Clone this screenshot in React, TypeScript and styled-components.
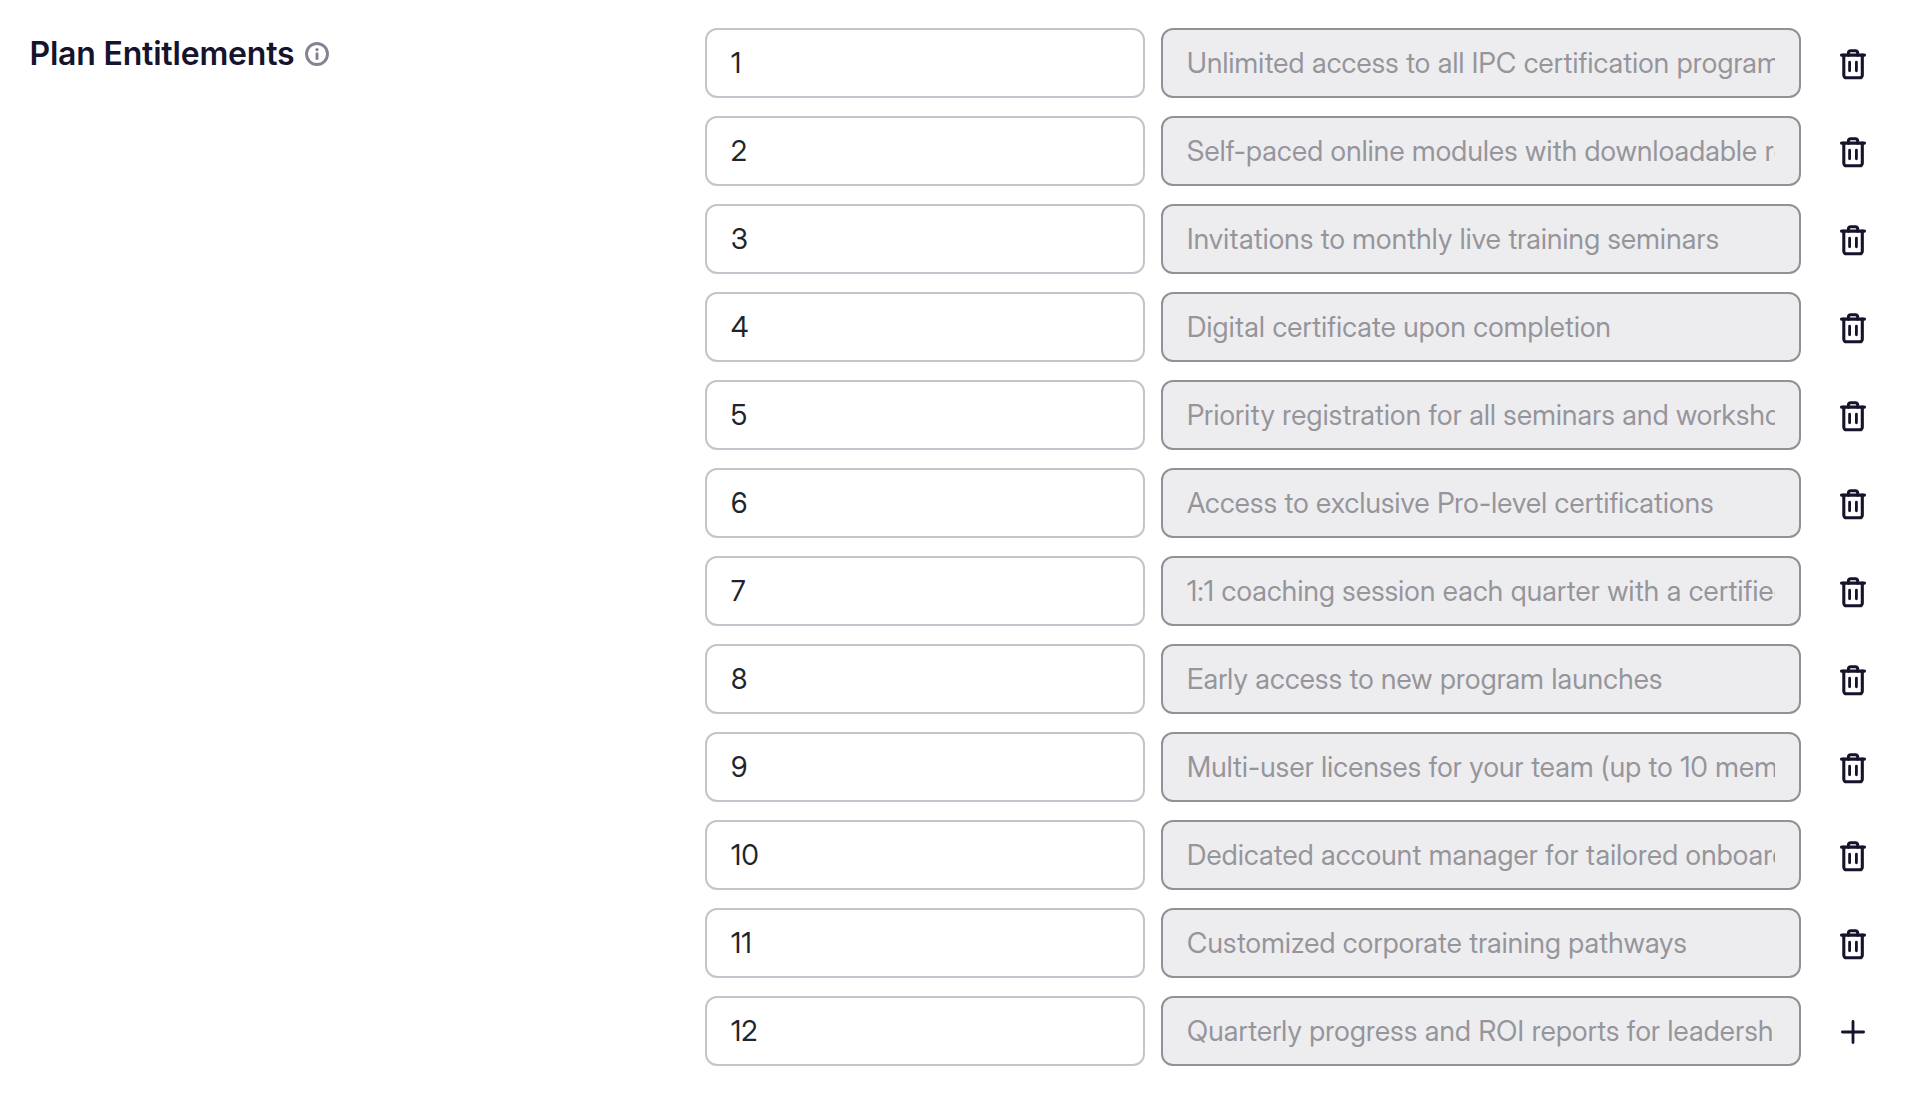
import { useState } from 'react'
import styled, { createGlobalStyle } from 'styled-components'

const GlobalStyle = createGlobalStyle`
  * {
    box-sizing: border-box;
  }

  body {
    margin: 0;
    background: #ffffff;
    font-family: Inter, 'Liberation Sans', sans-serif;
  }
`

const Section = styled.section`
  display: flex;
  align-items: flex-start;
  min-height: 100vh;
  padding: 28px 49px 28px 29px;
`

const SectionHeader = styled.div`
  display: flex;
  align-items: center;
  gap: 10px;
  width: 676px;
  flex-shrink: 0;
  padding-top: 6px;
`

const Title = styled.h2`
  margin: 0;
  padding-left: 0.5px;
  font-size: 32px;
  font-weight: 600;
  line-height: 40px;
  letter-spacing: -0.2px;
  color: #16132d;
  white-space: nowrap;
`

const EntitlementList = styled.div`
  display: flex;
  flex-direction: column;
  gap: 18px;
`

const EntitlementRow = styled.div`
  display: grid;
  grid-template-columns: 440px 640px 72px;
  column-gap: 16px;
  height: 70px;
`

const Field = styled.input`
  width: 100%;
  height: 70px;
  padding: 0 24px;
  border: 2px solid #c5c4cc;
  border-radius: 12px;
  outline: none;
  background: #ffffff;
  color: #212529;
  font-family: 'Inter Display', Inter, 'Liberation Sans', sans-serif;
  font-size: 28px;
  letter-spacing: 0.26px;

  &:disabled {
    border-color: #929197;
    background: #ededef;
    color: #96959b;
  }
`

const IconButton = styled.button`
  display: flex;
  align-items: center;
  justify-content: center;
  height: 72px;
  padding: 0;
  border: none;
  background: none;
  color: #16132d;
  cursor: pointer;
`

function InfoIcon() {
  return (
    <svg width="26" height="26" viewBox="0 0 26 26" fill="none" stroke="#858393" strokeLinecap="round">
      <circle cx="13" cy="13" r="10.5" strokeWidth="2.9" />
      <path d="M13 12.8v4.8" strokeWidth="3" />
      <circle cx="13" cy="8.6" r="1.6" fill="#858393" stroke="none" />
    </svg>
  )
}

function TrashIcon() {
  return (
    <svg
      width="36"
      height="36"
      viewBox="0 0 36 36"
      fill="none"
      stroke="currentColor"
      strokeWidth="3.1"
      strokeLinecap="round"
      strokeLinejoin="round"
    >
      <path d="M6.5 9.1h23" />
      <path d="M13.4 9.1V6.9a2.2 2.2 0 0 1 2.2-2.2h4.9a2.2 2.2 0 0 1 2.2 2.2v2.2" />
      <path d="M8.8 9.1v20.1a2.6 2.6 0 0 0 2.6 2.6h13.3a2.6 2.6 0 0 0 2.6-2.6V9.1" />
      <path d="M14.6 16.2v8.6M21.4 16.2v8.6" strokeWidth="2.8" />
    </svg>
  )
}

function PlusIcon() {
  return (
    <svg
      width="36"
      height="36"
      viewBox="0 0 36 36"
      fill="none"
      stroke="currentColor"
      strokeWidth="2.8"
      strokeLinecap="round"
    >
      <path d="M7.4 18h21.2M18 7.4v21.2" />
    </svg>
  )
}

const initialEntitlements = [
  'Unlimited access to all IPC certification programs',
  'Self-paced online modules with downloadable resources',
  'Invitations to monthly live training seminars',
  'Digital certificate upon completion',
  'Priority registration for all seminars and workshops',
  'Access to exclusive Pro-level certifications',
  '1:1 coaching session each quarter with a certified trainer',
  'Early access to new program launches',
  'Multi-user licenses for your team (up to 10 members)',
  'Dedicated account manager for tailored onboarding',
  'Customized corporate training pathways',
  'Quarterly progress and ROI reports for leadership',
].map((name, i) => ({ id: String(i + 1), name }))

export default function App() {
  const [entitlements, setEntitlements] = useState(initialEntitlements)

  const updateId = (index: number, id: string) =>
    setEntitlements(prev => prev.map((e, i) => (i === index ? { ...e, id } : e)))

  const remove = (index: number) => setEntitlements(prev => prev.filter((_, i) => i !== index))

  const add = () => setEntitlements(prev => [...prev, { id: String(prev.length + 1), name: '' }])

  return (
    <>
      <GlobalStyle />
      <Section>
        <SectionHeader>
          <Title>Plan Entitlements</Title>
          <InfoIcon />
        </SectionHeader>

        <EntitlementList>
          {entitlements.map((entitlement, i) => {
            const isLast = i === entitlements.length - 1
            return (
              <EntitlementRow key={i}>
                <Field value={entitlement.id} onChange={e => updateId(i, e.target.value)} />
                <Field value={entitlement.name} disabled />
                <IconButton type="button" onClick={() => (isLast ? add() : remove(i))}>
                  {isLast ? <PlusIcon /> : <TrashIcon />}
                </IconButton>
              </EntitlementRow>
            )
          })}
        </EntitlementList>
      </Section>
    </>
  )
}
